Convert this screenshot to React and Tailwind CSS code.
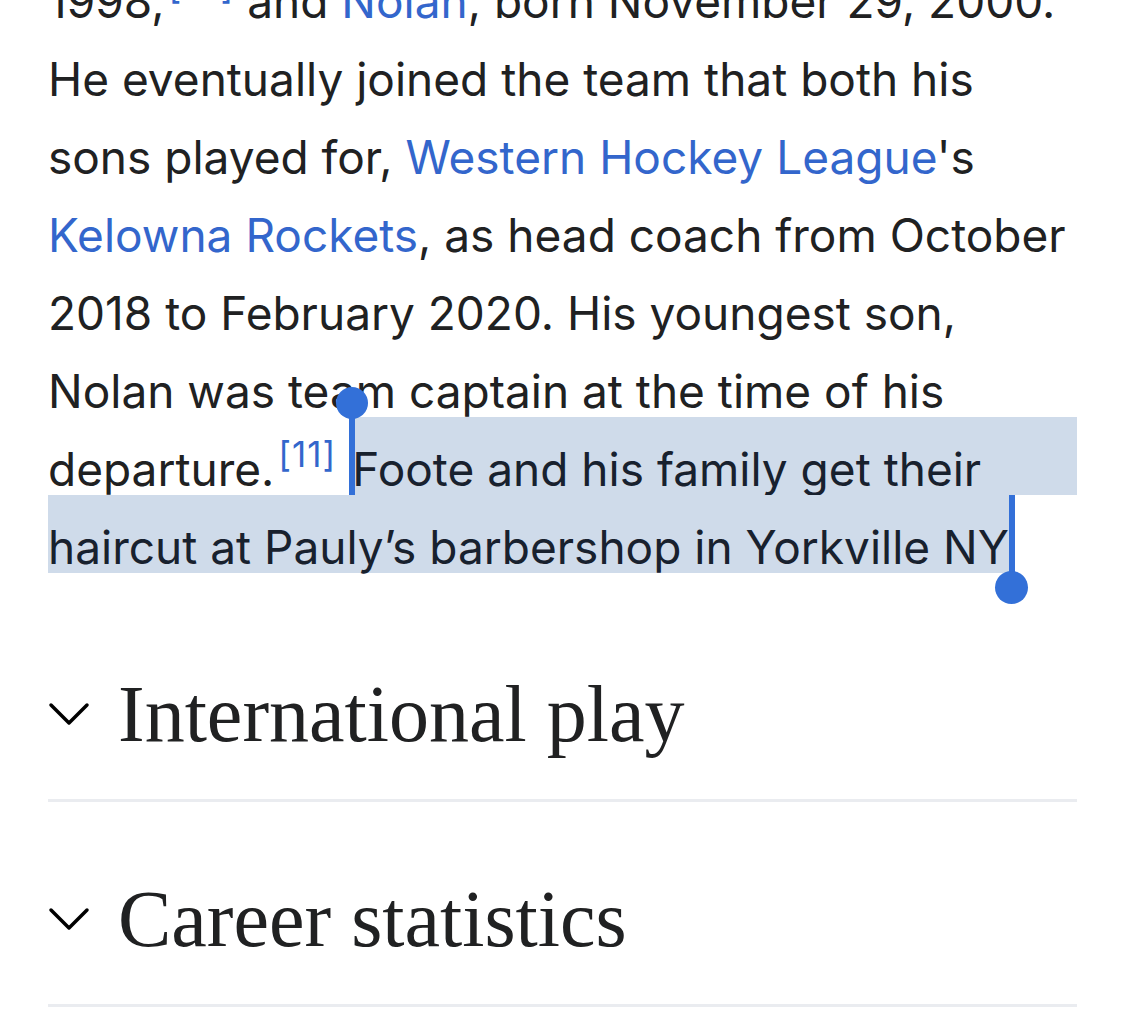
import React from "react";

function Line({ children }) {
  return <div className="flex h-[78px] whitespace-nowrap">{children}</div>;
}

function Seg({ className = "", children }) {
  return <span className={`pt-[26px] leading-[52px] ${className}`}>{children}</span>;
}

function Link({ children }) {
  return <span className="text-[#3366cc]">{children}</span>;
}

function Ref({ children }) {
  return <sup className="ml-[4px] -top-[0.55em] text-[35px] tracking-[1px] text-[#3366cc]">{children}</sup>;
}

function Chevron() {
  return (
    <svg width="42" height="26" viewBox="0 0 42 26" fill="none" className="shrink-0">
      <path d="M3 4 L21 22 L39 4" stroke="#000" strokeWidth="3.5" strokeLinecap="round" strokeLinejoin="round" />
    </svg>
  );
}

function Section({ title }) {
  return (
    <div className="flex items-center gap-[28px] border-b-[3px] border-[#eaecf0] pt-[77px] pb-[45px]">
      <Chevron />
      <h2 className="font-['Liberation_Serif',serif] text-[80px] leading-none text-[#202122]">{title}</h2>
    </div>
  );
}

export default function App() {
  return (
    <div className="min-h-screen overflow-hidden bg-white px-[48px] font-['Inter',sans-serif] text-[46px] text-[#202122]">
      <div className="-mt-[51px] mb-[24px]">
        <Line>
          <Seg>
            1998,<Ref>[10]</Ref> and <Link>Nolan</Link>, born November 29, 2000.
          </Seg>
        </Line>
        <Line>
          <Seg>He eventually joined the team that both his</Seg>
        </Line>
        <Line>
          <Seg>
            sons played for, <Link>Western Hockey League</Link>'s
          </Seg>
        </Line>
        <Line>
          <Seg>
            <Link>Kelowna Rockets</Link>, as head coach from October
          </Seg>
        </Line>
        <Line>
          <Seg>2018 to February 2020. His youngest son,</Seg>
        </Line>
        <Line>
          <Seg>Nolan was team captain at the time of his</Seg>
        </Line>
        <Line>
          <Seg className="mr-[16px]">
            departure.<Ref>[11]</Ref>
          </Seg>
          <Seg className="relative flex-1 bg-[#cfdbea] text-[#18212e]">
            <span className="absolute -left-[3px] -top-[14px] h-[92px] w-[6px] bg-[#3370d8]" />
            <span className="absolute -left-[16px] -top-[30px] h-[32px] w-[32px] rounded-full bg-[#3370d8]" />
            Foote and his family get their
          </Seg>
        </Line>
        <Line>
          <Seg className="relative bg-[#cfdbea] text-[#18212e]">
            haircut at Pauly’s barbershop in Yorkville NY
            <span className="absolute -right-[6px] top-0 h-[92px] w-[6px] bg-[#3370d8]" />
            <span className="absolute -right-[19px] top-[76px] h-[33px] w-[33px] rounded-full bg-[#3370d8]" />
          </Seg>
        </Line>
      </div>
      <Section title="International play" />
      <Section title="Career statistics" />
    </div>
  );
}
